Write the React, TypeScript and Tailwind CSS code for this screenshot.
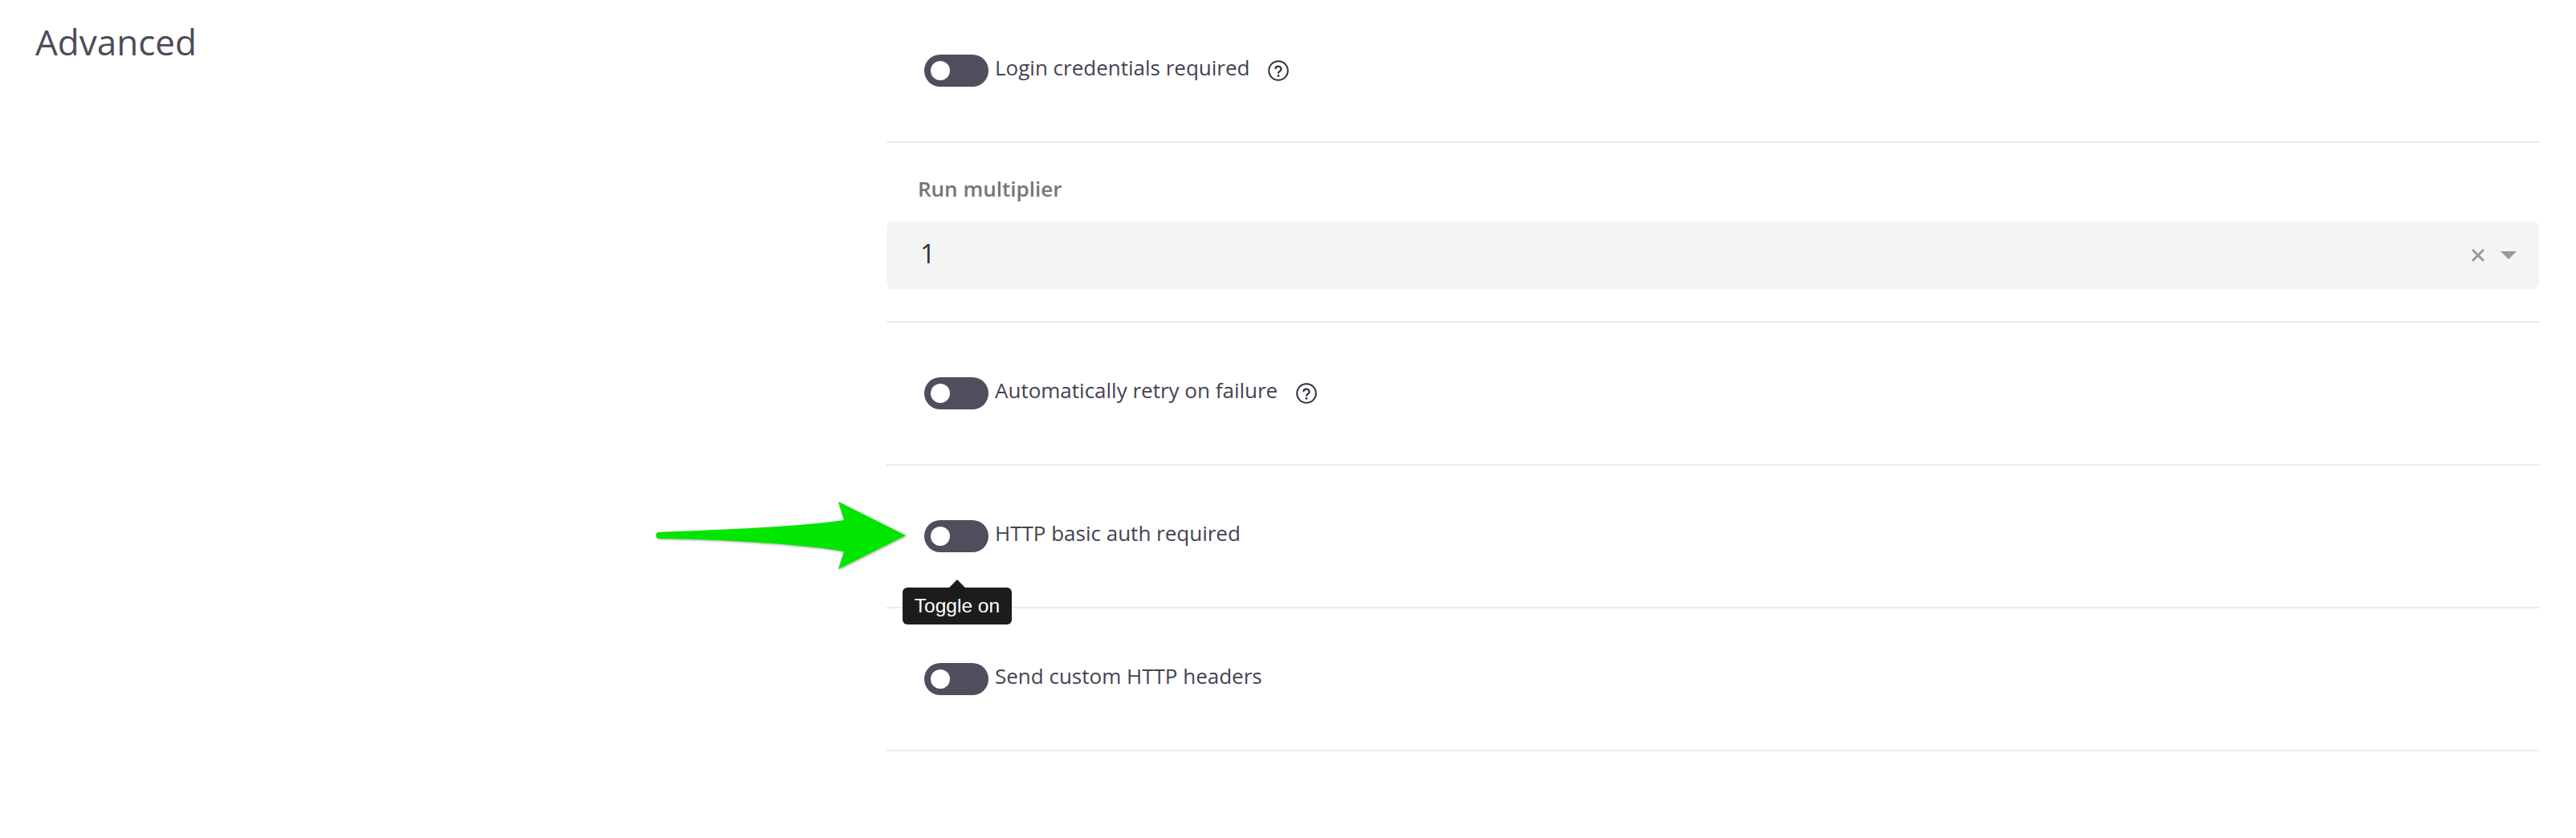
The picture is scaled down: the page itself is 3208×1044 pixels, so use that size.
import React from "react";

const font = { fontFamily: '"Open Sans", "Noto Sans", sans-serif' };

function Help() {
  return (
    <svg width="28" height="28" viewBox="0 0 28 28" fill="none" className="ml-[22px] -mt-[1px] shrink-0">
      <circle cx="14" cy="14" r="11.8" stroke="#2f2e3a" strokeWidth="2" />
      <path d="M10.4 11.2a3.7 3.7 0 0 1 7.2 1c0 2.4-3.5 2.9-3.5 4.6" stroke="#2f2e3a" strokeWidth="2.2" fill="none" strokeLinecap="round" />
      <circle cx="14" cy="20.4" r="1.4" fill="#2f2e3a" />
    </svg>
  );
}

function ToggleRow({ label, help, h, tooltip }: { label: string; help?: boolean; h: string; tooltip?: boolean }) {
  return (
    <div className={`relative flex items-center pl-[47px] border-b-2 border-[#ebebeb] ${h}`}>
      <div className="flex items-center">
        <div className="relative w-[80px] h-[40px] rounded-[20px] bg-[#4f4e5c] flex items-center pl-[8px] shrink-0">
          <div className="w-[24px] h-[24px] rounded-full bg-white" />
        </div>
        <span className="ml-[8px] text-[26px] leading-[36px] text-[#444351] -mt-[8px]">{label}</span>
        {help && <Help />}
      </div>
      {tooltip && (
        <div className="absolute left-[20px] top-[152px] z-10 w-[136px] h-[46px] rounded-[6px] bg-[#1c1c1c] flex items-center justify-center">
          <div className="absolute -top-[7px] left-[61px] w-[14px] h-[14px] rotate-45 bg-[#1c1c1c]" />
          <span className="relative text-white text-[24.5px] leading-none" style={{ fontFamily: '"Liberation Sans", sans-serif' }}>Toggle on</span>
        </div>
      )}
    </div>
  );
}

export default function App() {
  return (
    <div className="relative flex w-[3208px] h-[1044px] bg-white overflow-hidden" style={font}>
      <div className="w-[1104px] shrink-0 pl-[44px] pt-[22px]">
        <h2 className="text-[44px] leading-[60px] font-normal text-[#4c4b59]">Advanced</h2>
      </div>
      <div className="w-[2058px] shrink-0 flex flex-col">
        <ToggleRow label="Login credentials required" help h="h-[178px]" />
        <div className="h-[224px] border-b-2 border-[#ebebeb] pt-[39px]">
          <div className="pl-[39px] text-[26px] leading-[36px] font-semibold text-[#757575]">Run multiplier</div>
          <div className="mt-[23px] h-[84px] rounded-[8px] bg-[#f4f4f4] flex items-center pl-[42px] pr-[28px]">
            <span className="text-[33px] leading-[44px] -mt-[4px] text-[#333333] flex-1">1</span>
            <svg width="18" height="18" viewBox="0 0 18 18" className="mr-[19px]">
              <path d="M2 2 16 16M16 2 2 16" stroke="#999999" strokeWidth="3" />
            </svg>
            <svg width="20" height="10" viewBox="0 0 20 10">
              <path d="M0 0h20L10 10z" fill="#999999" />
            </svg>
          </div>
        </div>
        <ToggleRow label="Automatically retry on failure" help h="h-[178px]" />
        <ToggleRow label="HTTP basic auth required" h="h-[178px]" tooltip />
        <ToggleRow label="Send custom HTTP headers" h="h-[178px]" />
      </div>
      <svg className="absolute left-[810px] top-[615px] z-20" width="330" height="105" viewBox="810 615 330 105" style={{ filter: "drop-shadow(1px 1px 1.5px rgba(0,0,0,0.35))" }}>
        <path d="M1128 667 1044 625 1051 648C1000 656 900 660 821 663a4 4 0 0 0 0 8C900 672 1000 678 1051 687L1044 709Z" fill="#00e600" />
      </svg>
    </div>
  );
}
